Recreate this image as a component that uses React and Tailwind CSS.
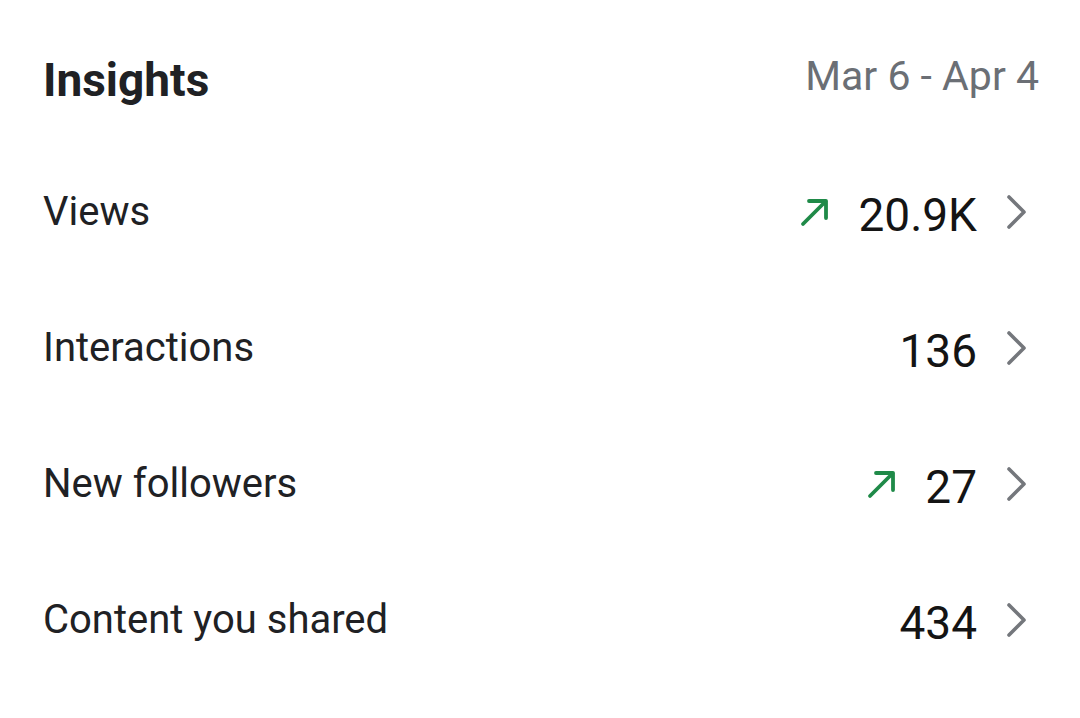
import React from "react";

const Arrow = () => (
  <svg width="32" height="32" viewBox="0 0 32 32" fill="none" className="mr-[27px]">
    <path d="M4 28 L27 5 M10 5 H27 V22" stroke="#1f8a48" strokeWidth="3.8" strokeLinecap="round" strokeLinejoin="round" />
  </svg>
);

const Chevron = () => (
  <svg width="24" height="36" viewBox="0 0 24 36" fill="none" className="ml-[28px]">
    <path d="M4 3 L19 18 L4 33" stroke="#74777c" strokeWidth="3.6" strokeLinecap="round" strokeLinejoin="round" />
  </svg>
);

const rows = [
  { label: "Views", value: "20.9K", up: true },
  { label: "Interactions", value: "136", up: false },
  { label: "New followers", value: "27", up: true },
  { label: "Content you shared", value: "434", up: false },
];

export default function App() {
  return (
    <div className="w-[1080px] h-[718px] bg-white pl-[43px] pr-[51px]" style={{ fontFamily: "Roboto, sans-serif" }}>
      <div className="flex items-center justify-between h-[160px]">
        <div className="text-[46px] font-bold text-[#202124] leading-none">Insights</div>
        <div className="text-[41px] text-[#6b6f75] leading-none mr-[-10px] mt-[-8px]">Mar 6 - Apr 4</div>
      </div>
      {rows.map((r) => (
        <div key={r.label} className="flex items-center justify-between h-[136px] mt-[-16px] mb-[16px]">
          <div className="text-[40px] text-[#202124] leading-none">{r.label}</div>
          <div className="flex items-center">
            {r.up && <Arrow />}
            <div className="text-[46px] text-[#141414] leading-none mt-[6px]">{r.value}</div>
            <Chevron />
          </div>
        </div>
      ))}
    </div>
  );
}
